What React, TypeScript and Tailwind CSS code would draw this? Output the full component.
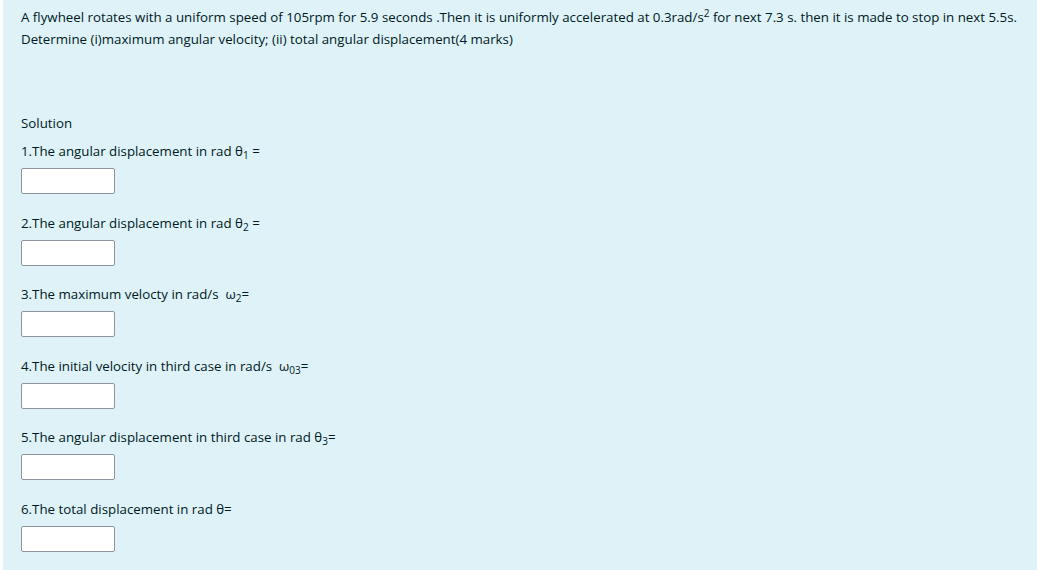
import React from 'react';

const Sub = ({ children }: { children: React.ReactNode }) => (
  <span className="relative top-[3px] text-[10px] leading-none">{children}</span>
);

const items: { label: string; sym: React.ReactNode }[] = [
  { label: '1.The angular displacement in rad ', sym: <>θ<Sub>1</Sub> =</> },
  { label: '2.The angular displacement in rad ', sym: <>θ<Sub>2</Sub> =</> },
  { label: '3.The maximum velocty in rad/s  ', sym: <>ω<Sub>2</Sub>=</> },
  { label: '4.The initial velocity in third case in rad/s  ', sym: <>ω<Sub>03</Sub>=</> },
  { label: '5.The angular displacement in third case in rad ', sym: <>θ<Sub>3</Sub>=</> },
  { label: '6.The total displacement in rad ', sym: <>θ=</> },
];

export default function App() {
  return (
    <div className="w-[1037px] h-[570px] bg-white pl-[3px]" style={{ fontFamily: '"Open Sans", "Noto Sans", sans-serif' }}>
      <div className="h-full bg-[#def2f8] pl-[18px] pt-[6px] text-[13.3px] leading-[22px] text-[#001a1e]">
        <p>
          A flywheel rotates with a uniform speed of 105rpm for 5.9 seconds .Then it is uniformly accelerated at 0.3rad/s
          <span className="relative top-[-5px] text-[10px] leading-none">2</span> for next 7.3 s. then it is made to stop in next 5.5s.
        </p>
        <p>Determine (i)maximum angular velocity; (ii) total angular displacement(4 marks)</p>

        <p className="mt-[62px]">Solution</p>
        <div className="mt-[6px] flex flex-col gap-[17.6px]">
          {items.map((it, i) => (
            <div key={i} className="flex flex-col">
              <p className="whitespace-pre h-[22px]">
                {it.label}
                {it.sym}
              </p>
              <input
                type="text"
                className="mt-[6px] w-[94px] h-[26px] bg-white border border-[#8f959e] rounded-[2px]"
              />
            </div>
          ))}
        </div>
      </div>
    </div>
  );
}
